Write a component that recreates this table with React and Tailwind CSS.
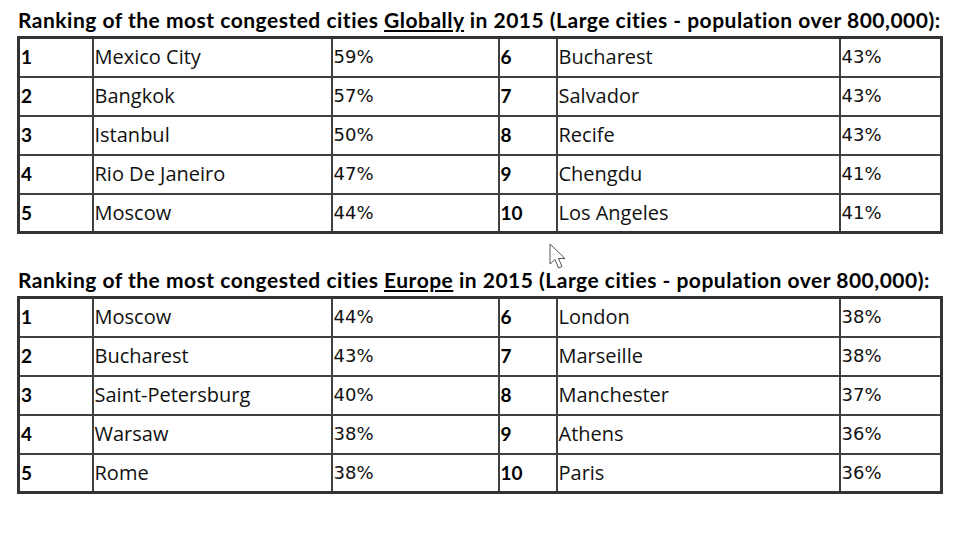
import React from "react";

const globalRows = [
  ["1", "Mexico City", "59%", "6", "Bucharest", "43%"],
  ["2", "Bangkok", "57%", "7", "Salvador", "43%"],
  ["3", "Istanbul", "50%", "8", "Recife", "43%"],
  ["4", "Rio De Janeiro", "47%", "9", "Chengdu", "41%"],
  ["5", "Moscow", "44%", "10", "Los Angeles", "41%"],
];

const europeRows = [
  ["1", "Moscow", "44%", "6", "London", "38%"],
  ["2", "Bucharest", "43%", "7", "Marseille", "38%"],
  ["3", "Saint-Petersburg", "40%", "8", "Manchester", "37%"],
  ["4", "Warsaw", "38%", "9", "Athens", "36%"],
  ["5", "Rome", "38%", "10", "Paris", "36%"],
];

const cell = "border-2 border-[#404040] h-[39px] px-[1px] align-middle leading-[24px]";
const rank = "font-['Lato'] font-bold text-[19px] text-black";
const city = "font-['Open_Sans'] text-[20px] text-[#111]";
const pct = "font-['DejaVu_Sans'] text-[18px] text-[#111]";

function Title({ region }) {
  return (
    <h2 className="font-['Lato'] font-bold text-[21px] tracking-[0.5px] leading-[24px] text-black pl-[1px] whitespace-nowrap">
      Ranking of the most congested cities <span className="underline">{region}</span> in 2015 (Large cities -
      population over 800,000):
    </h2>
  );
}

function RankTable({ rows }) {
  return (
    <table className="table-fixed border-collapse border-[3px] border-[#333] w-[923px]">
      <colgroup>
        <col className="w-[74px]" />
        <col className="w-[239px]" />
        <col className="w-[167px]" />
        <col className="w-[58px]" />
        <col className="w-[283px]" />
        <col className="w-[102px]" />
      </colgroup>
      <tbody>
        {rows.map((r) => (
          <tr key={r[0]}>
            <td className={`${cell} ${rank}`}>{r[0]}</td>
            <td className={`${cell} ${city}`}>{r[1]}</td>
            <td className={`${cell} ${pct}`}>{r[2]}</td>
            <td className={`${cell} ${rank}`}>{r[3]}</td>
            <td className={`${cell} ${city}`}>{r[4]}</td>
            <td className={`${cell} ${pct}`}>{r[5]}</td>
          </tr>
        ))}
      </tbody>
    </table>
  );
}

export default function App() {
  return (
    <div className="relative w-[979px] h-[535px] bg-white overflow-hidden pl-[17px] pt-[8px]">
      <Title region="Globally" />
      <div className="mt-[4px]">
        <RankTable rows={globalRows} />
      </div>

      <div className="mt-[34px]">
        <Title region="Europe" />
      </div>
      <div className="mt-[4px]">
        <RankTable rows={europeRows} />
      </div>

      {/* mouse pointer */}
      <svg className="absolute left-[549px] top-[243px]" width="18" height="28" viewBox="0 0 18 28">
        <path
          d="M1 1 L1 21 L6 16.5 L9.5 25 L13 23.5 L9.5 15.5 L16 15.5 Z"
          fill="white"
          stroke="#555"
          strokeWidth="1"
          strokeLinejoin="round"
        />
      </svg>
    </div>
  );
}
